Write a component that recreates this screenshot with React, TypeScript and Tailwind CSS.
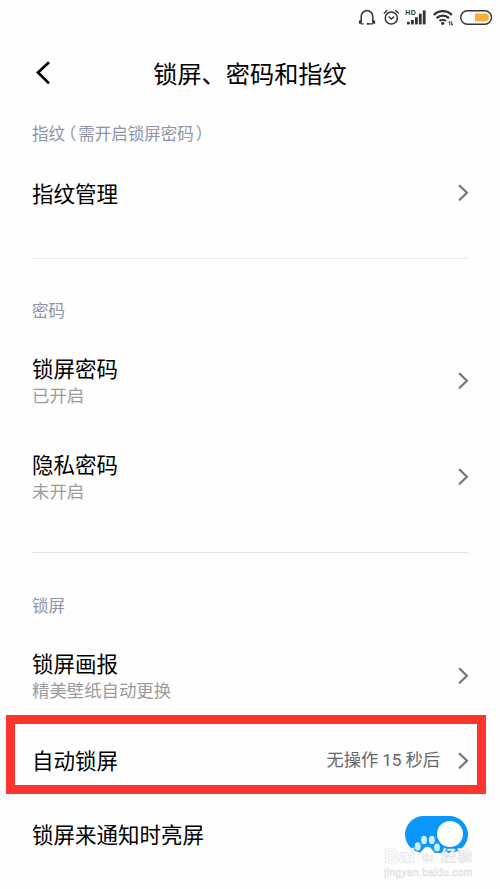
import type { ReactNode } from 'react'

function Chevron() {
  return (
    <svg className="w-[11px] h-[17px] -mr-px shrink-0" viewBox="0 0 11 17" fill="none" stroke="#757575" strokeWidth="2.2">
      <path d="M1.7 1.8 8.9 8.8 1.7 15.8" strokeLinecap="round" strokeLinejoin="miter" />
    </svg>
  )
}

function StatusBar() {
  return (
    <div className="h-9 pl-[357px]">
      <svg className="w-[140px] h-9" viewBox="357 0 140 36" fill="none" stroke="#333" strokeWidth="1.5">
        {/* headset */}
        <path d="M361.2 22.5V16.6a5.8 6 0 0 1 11.6 0v5.9" />
        <path d="M360.2 20.4v3.4M373.8 20.4v3.4" strokeWidth="2.6" />
        <path d="M361 23.9h2.6M367.6 23.9h5.4" strokeWidth="1.3" />
        <circle cx="367.8" cy="23.8" r="1.1" fill="#333" stroke="none" />
        {/* alarm */}
        <circle cx="391.3" cy="18" r="6.1" />
        <path d="m388.6 16.6 2.7 2.4 2.8-2.4M383.9 13.4l3.4-3.1M398.7 13.4l-3.4-3.1" strokeWidth="1.4" />
        {/* signal */}
        <g fill="#333" stroke="none">
          <text x="405.3" y="14.8" fontSize="7" fontWeight="700" fontFamily="Liberation Sans, sans-serif" textLength="10.5">HD</text>
          <rect x="407" y="21.8" width="2.8" height="2.6" />
          <rect x="411" y="20" width="2.8" height="4.4" />
          <rect x="415" y="17.2" width="2.8" height="7.2" />
          <rect x="418.9" y="13.7" width="2.8" height="10.7" />
          <rect x="422.8" y="10.4" width="2.8" height="14" />
        </g>
        {/* wifi */}
        <path d="M433.8 15a12.6 12.6 0 0 1 18 0M436.6 18.1a8.8 8.8 0 0 1 12.4 0M439.5 21a4.8 4.8 0 0 1 6.4 0" strokeWidth="2.2" />
        <circle cx="442.7" cy="23.3" r="1.6" fill="#333" stroke="none" />
        <path d="m448.6 22.6 1.2-1.2v3.8M451.7 21.4v3.8l1.1-1.2" strokeWidth="1" />
        {/* battery */}
        <rect x="460.7" y="10.8" width="30.8" height="13.4" rx="6.7" strokeWidth="1.4" />
        <path d="M475 13.4h10.2a3.6 4 0 0 1 0 8H475z" fill="#f9ae35" stroke="none" />
      </svg>
    </div>
  )
}

function SectionLabel({ children }: { children: ReactNode }) {
  return <h2 className="h-11 flex items-center text-[16.5px] text-[#8d93a8]">{children}</h2>
}

interface RowProps {
  title: string
  subtitle?: string
  className?: string
  children?: ReactNode
}

function Row({ title, subtitle, className = 'h-24', children }: RowProps) {
  return (
    <div className={`relative flex items-center justify-between ${className}`}>
      <div>
        <p className="text-[21.5px] leading-[28px] text-black">{title}</p>
        {subtitle && <p className="text-[17.4px] leading-[25px] text-[#9b9b9b]">{subtitle}</p>}
      </div>
      {children ?? <Chevron />}
    </div>
  )
}

function Watermark() {
  return (
    <svg className="absolute left-[380px] top-[822px] w-[100px] h-[60px]" viewBox="380 822 100 60">
      <g fill="#fff" fillOpacity="0.8">
        <ellipse cx="417.7" cy="846.4" rx="3" ry="4.2" />
        <ellipse cx="424" cy="840" rx="3" ry="4.2" />
        <ellipse cx="431.8" cy="840" rx="3" ry="4.2" />
        <ellipse cx="437" cy="847.6" rx="3" ry="4" />
      </g>
      <g fill="#fff" stroke="#dedede" strokeWidth="0.6">
        <path d="M427.5 847c4 0 5 4 8 7s2 8.500-3 8.500h-10c-5 0-6-5.500-3-8.500s4-7 8-7z" stroke="#e6eef5" />
        <text x="384" y="862.5" fontSize="20" fontWeight="700" fontFamily="Liberation Sans, sans-serif" textLength="31">Bai</text>
        <text x="421.500" y="860.5" fontSize="11" fontWeight="700" fontFamily="Liberation Sans, sans-serif" textLength="12">du</text>
        <text x="441" y="861" fontSize="15" fontWeight="700" fontFamily="Noto Sans CJK SC, sans-serif" textLength="31">经验</text>
        <text x="384" y="876" fontSize="10" fontFamily="Liberation Sans, sans-serif" textLength="88">jingyan.baidu.com</text>
      </g>
    </svg>
  )
}

export default function App() {
  return (
    <div className="relative w-[500px] h-[889px] overflow-hidden bg-[#fefefe] font-['Noto_Sans_CJK_SC',sans-serif]">
      <StatusBar />
      <header className="h-[74px] px-8 grid grid-cols-[24px_1fr_24px] items-center">
        <svg className="w-6 h-6" viewBox="0 0 24 24" fill="none" stroke="#000" strokeWidth="2.7">
          <path d="M17 1.2 6 11.5 17 22.4" />
        </svg>
        <h1 className="text-center text-[24.2px] leading-8 text-black whitespace-nowrap">锁屏、密码和指纹</h1>
      </header>

      <main className="px-8">
        <section className="pt-px pb-7">
          <SectionLabel>
            指纹
            <span className="ml-[3px] mr-[2px] [font-feature-settings:'halt']">（</span>
            需开启锁屏密码
            <span className="ml-[2px] [font-feature-settings:'halt']">）</span>
          </SectionLabel>
          <Row title="指纹管理" className="h-[75px]" />
        </section>

        <section className="pt-[29px] pb-7 border-t border-[#e9e9e9]">
          <SectionLabel>密码</SectionLabel>
          <Row title="锁屏密码" subtitle="已开启" />
          <Row title="隐私密码" subtitle="未开启" />
        </section>

        <section className="pt-[30px] border-t border-[#e4e4e4]">
          <SectionLabel>锁屏</SectionLabel>
          <Row title="锁屏画报" subtitle="精美壁纸自动更换" />
          <Row title="自动锁屏" className="h-[74px]">
            <div className="flex items-center gap-[18px] text-[17.3px] text-[#666]">
              <span>无操作 <span className="font-[Roboto]">15</span> 秒后</span>
              <Chevron />
            </div>
            <div className="absolute -left-[26px] -top-2 w-[480px] h-[79px] border-[9px] border-[#fc352e]" />
          </Row>
          <Row title="锁屏来通知时亮屏" className="h-[74px]">
            <button type="button" className="w-[63px] h-[37px] p-[5px] flex justify-end items-center rounded-full bg-[#0a96fb]">
              <span className="size-[26px] rounded-full bg-white" />
            </button>
          </Row>
        </section>
      </main>
      <Watermark />
    </div>
  )
}
